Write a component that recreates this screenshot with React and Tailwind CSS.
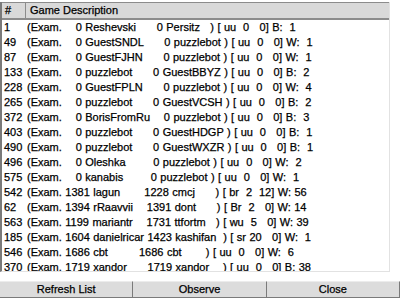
const games = [
  ["1", "(Exam.    0 Reshevski      0 Persitz   ) [ uu  0   0] B:  1"],
  ["49", "(Exam.    0 GuestSNDL      0 puzzlebot ) [ uu  0   0] W:  1"],
  ["87", "(Exam.    0 GuestFJHN      0 puzzlebot ) [ uu  0   0] W:  1"],
  ["133", "(Exam.    0 puzzlebot      0 GuestBBYZ ) [ uu  0   0] B:  2"],
  ["228", "(Exam.    0 GuestFPLN      0 puzzlebot ) [ uu  0   0] W:  4"],
  ["265", "(Exam.    0 puzzlebot      0 GuestVCSH ) [ uu  0   0] B:  2"],
  ["372", "(Exam.    0 BorisFromRu    0 puzzlebot ) [ uu  0   0] B:  3"],
  ["403", "(Exam.    0 puzzlebot      0 GuestHDGP ) [ uu  0   0] B:  1"],
  ["490", "(Exam.    0 puzzlebot      0 GuestWXZR ) [ uu  0   0] B:  1"],
  ["496", "(Exam.    0 Oleshka        0 puzzlebot ) [ uu  0   0] W:  2"],
  ["575", "(Exam.    0 kanabis        0 puzzlebot ) [ uu  0   0] W:  1"],
  ["542", "(Exam. 1381 lagun       1228 cmcj      ) [ br  2  12] W: 56"],
  ["62", "(Exam. 1394 rRaavvii    1391 dont      ) [ Br  2   0] W: 14"],
  ["563", "(Exam. 1199 mariantr    1731 ttfortm   ) [ wu  5   0] W: 39"],
  ["185", "(Exam. 1604 danielricar 1423 kashifan  ) [ sr 20   0] W:  1"],
  ["546", "(Exam. 1686 cbt         1686 cbt       ) [ uu  0   0] W:  6"],
  ["370", "(Exam. 1719 xandor      1719 xandor    ) [ uu  0   0] B: 38"],
];

const App = () => {
  return (
    <div className="w-[400px] h-[300px] bg-white flex flex-col font-['Liberation_Sans',Arial,sans-serif] text-[11px] text-black [-webkit-text-stroke:0.25px]">
      <div className="mt-[2px] w-[390px] h-[270px] border-l-2 border-l-[#7a7a7a] border-r border-r-[#e2e2e2] border-b border-b-[#e2e2e2] overflow-hidden flex flex-col">
        <div className="flex h-[18px] shrink-0 bg-[#d9d9d9] border-t border-b-2 border-[#8c8c8c] items-center">
          <div className="w-[24px] pl-[3px] border-r border-[#8c8c8c] h-full flex items-center">#</div>
          <div className="pl-[4px]">Game Description</div>
        </div>
        <div className="flex flex-col [word-spacing:0.4px]">
          {games.map(([num, desc]) => (
            <div key={num} className="flex h-[15px] items-center whitespace-pre shrink-0">
              <div className="w-[25px] pl-[2px]">{num}</div>
              <div>{desc}</div>
            </div>
          ))}
        </div>
      </div>
      <div className="mt-[9px] flex h-[17px]">
        {["Refresh List", "Observe", "Close"].map((label) => (
          <button
            key={label}
            className="flex-1 bg-[#dcdcdc] border-t border-t-[#ececec] border-r border-b border-r-[#7a7a7a] border-b-[#7a7a7a] flex items-center justify-center"
          >
            {label}
          </button>
        ))}
      </div>
    </div>
  );
};

export default App;
